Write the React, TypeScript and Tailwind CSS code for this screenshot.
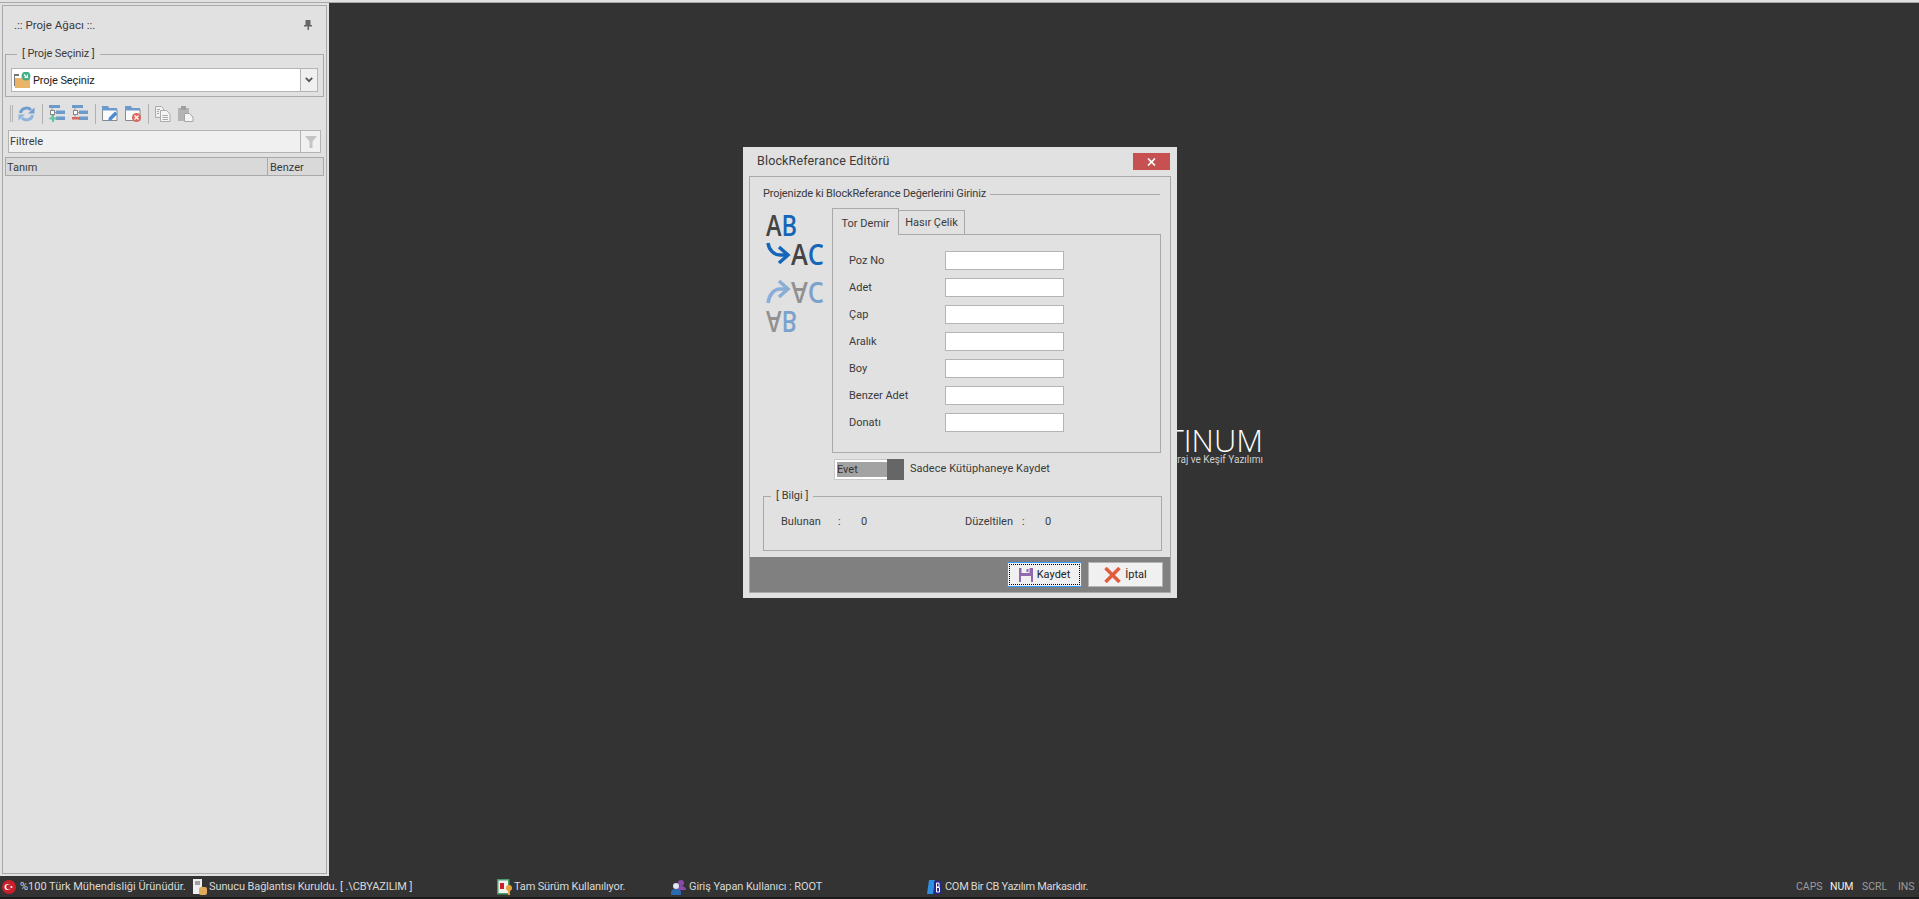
import type { ReactNode } from 'react'

const fieldRows = ['Poz No', 'Adet', 'Çap', 'Aralık', 'Boy', 'Benzer Adet', 'Donatı']

function Refresh() {
    return (
        <svg width="17" height="16" viewBox="0 0 17 16" fill="none">
            <path d="M2.500 7a6 5.500 0 0 1 10.500-3" stroke="#6f9fd0" strokeWidth="3" />
            <path d="M14.500 9a6 5.500 0 0 1-10.500 3" stroke="#8fb5dc" strokeWidth="3" />
            <path d="M16.500 1.500v6h-6.500z" fill="#6f9fd0" />
            <path d="M0.500 14.500v-6h6.500z" fill="#8fb5dc" />
        </svg>
    )
}

function TreeIcon({ mark }: { mark: 'add' | 'remove' }) {
    return (
        <svg width="16" height="17" viewBox="0 0 16 17" fill="none">
            <rect x="0" y="0" width="11" height="3" fill="#6c9bcb" />
            <path d="M3 3v10M3 7.500h5" stroke="#999" />
            <rect x="1.500" y="5.500" width="4" height="4" fill="#fff" stroke="#888" />
            <rect x="7" y="5.500" width="9" height="3.500" fill="#6c9bcb" />
            <rect x="7" y="11.500" width="9" height="3.500" fill="#6c9bcb" />
            {mark === 'add' ? (
                <path d="M4 10v7M0.500 13.500h7" stroke="#62c4a0" strokeWidth="2" />
            ) : (
                <rect x="0" y="12" width="8" height="2.500" fill="#d9685a" />
            )}
        </svg>
    )
}

function FolderIcon({ children }: { children: ReactNode }) {
    return (
        <svg width="16" height="16" viewBox="0 0 16 16" fill="none">
            <path d="M0.500 3.500h14.500v11h-14.500z" fill="#fafafa" stroke="#8a8a8a" />
            <path d="M0 0h6l1 2h8v2.500h-15z" fill="#6c9bcb" />
            {children}
        </svg>
    )
}

function CopyIcon() {
    return (
        <svg width="16" height="16" viewBox="0 0 16 16" fill="none" stroke="#ababab">
            <path d="M0.500 0.500h6l2 2v9h-8z" fill="#efefef" />
            <path d="M5.500 4.500h6l3.500 3.500v7.500h-9.500z" fill="#f4f4f4" />
            <path d="M7.500 9.500h5.500M7.500 11.500h5.500M7.500 13.500h5.500M2 3.500h3M2 5.500h2M2 7.500h2" />
        </svg>
    )
}

function PasteIcon() {
    return (
        <svg width="16" height="16" viewBox="0 0 16 16" fill="none">
            <rect x="0" y="2" width="11" height="13" fill="#b4b4b4" />
            <rect x="3" y="0" width="5" height="4" fill="#9e9e9e" />
            <path d="M6.500 7.500h5l3.500 3.500v4.500h-8.500z" fill="#f4f4f4" stroke="#a5a5a5" />
        </svg>
    )
}

function ToolbarSep() {
    return <div className="w-px h-[20px] bg-[#b0b0b0] ml-[7px] mr-[6px]" />
}

function LeftPanel() {
    return (
        <div className="h-full w-[329px] bg-[#e1e1e1] p-[2px] shrink-0">
            <div className="h-full border border-[#a9a9a9] px-[2px] flex flex-col">
                <div className="h-[41px] flex items-start justify-between pl-[9px] pr-[11px] pt-[12px] shrink-0">
                    <span className="text-[11.500px]">.:: Proje Ağacı ::.</span>
                    <svg width="8" height="10" viewBox="0 0 8 10" className="mr-[1px] mt-[2px]">
                        <path d="M1.500 0h5v5h1.500v1.500h-3v3.500h-1.500v-3.500h-3.500v-1.500h1.500z" fill="#666" />
                    </svg>
                </div>
                <fieldset className="border border-[#a9a9a9] h-[50px] px-[5px] min-w-0 shrink-0">
                    <legend className="ml-[6px] px-[5px] leading-[14px] text-[11px] tracking-[-0.100px]">[ Proje Seçiniz ]</legend>
                    <div className="h-[24px] mt-[7px] flex border border-[#b4b4b4] bg-white">
                        <div className="flex-1 flex items-center pl-[2px] gap-[2px]">
                            <svg width="17" height="16" viewBox="0 0 17 16" fill="none">
                                <path d="M0 2h5v2h-5z" fill="#777" />
                                <path d="M0 2h1v12h-1z" fill="#777" />
                                <path d="M1 6h15v10h-15z" fill="#e9b468" />
                                <circle cx="12" cy="4" r="4.500" fill="#44ae88" />
                                <path d="M10 2.500l2.500 2.500M13.500 2.500v3h-3" stroke="#fff" strokeWidth="1.200" />
                            </svg>
                            <span className="text-[#222] mt-[1px] tracking-[-0.100px]">Proje Seçiniz</span>
                        </div>
                        <div className="w-[17px] bg-[#f0f0f0] border-l border-[#b4b4b4] flex items-center justify-center">
                            <svg width="8" height="6" viewBox="0 0 8 6" fill="none">
                                <path d="M0.800 0.800l3.200 3.400l3.200-3.400" stroke="#555" strokeWidth="1.800" />
                            </svg>
                        </div>
                    </div>
                </fieldset>
                <div className="h-[27px] mt-[3px] flex items-center pl-[5px] shrink-0">
                    <div className="w-[3px] h-[17px] border-x border-[#b5b5b5] mr-[5px]" />
                    <Refresh />
                    <ToolbarSep />
                    <TreeIcon mark="add" />
                    <div className="w-[7px]" />
                    <TreeIcon mark="remove" />
                    <ToolbarSep />
                    <FolderIcon>
                        <path d="M6 15l1-3.500l6-6l2.500 2.500l-6 6z" fill="#4d8ad0" />
                    </FolderIcon>
                    <div className="w-[7px]" />
                    <FolderIcon>
                        <circle cx="11.500" cy="11.500" r="4.500" fill="#d9685a" />
                        <path d="M9.500 9.500l4 4M13.500 9.500l-4 4" stroke="#fff" strokeWidth="1.300" />
                    </FolderIcon>
                    <ToolbarSep />
                    <CopyIcon />
                    <div className="w-[7px]" />
                    <PasteIcon />
                </div>
                <div className="h-[23px] mt-[3px] mx-[3px] flex border border-[#b4b4b4] bg-[#f0f0f0] shrink-0">
                    <span className="flex-1 leading-[21px] pl-[1px]">Filtrele</span>
                    <div className="w-[20px] border-l border-[#b4b4b4] flex items-center justify-center">
                        <svg width="12" height="12" viewBox="0 0 12 12">
                            <path d="M0 0h12l-4.500 5.500v6.500h-3v-6.500z" fill="#c4c4c4" />
                        </svg>
                    </div>
                </div>
                <div className="h-[19px] mt-[4px] flex border border-[#a9a9a9] bg-[#d9d9d9] shrink-0 leading-[19px]">
                    <span className="flex-1 pl-[1px]">Tanım</span>
                    <span className="w-[56px] border-l border-[#a9a9a9] pl-[2px]">Benzer</span>
                </div>
            </div>
        </div>
    )
}

function AbLogo() {
    const font = { fontFamily: '"Open Sans", sans-serif', fontWeight: 600, fontSize: 28 }
    const letters = (
        <>
            <text x="1" y="21" textLength="31" lengthAdjust="spacingAndGlyphs">
                <tspan fill="#444444">A</tspan>
                <tspan fill="#1565b8">B</tspan>
            </text>
            <text x="26" y="50" textLength="33" lengthAdjust="spacingAndGlyphs">
                <tspan fill="#444444">A</tspan>
                <tspan fill="#1565b8">C</tspan>
            </text>
        </>
    )
    return (
        <svg width="60" height="118" viewBox="0 0 60 118" className="shrink-0">
            <g style={font}>{letters}</g>
            <g style={font} transform="translate(0 117) scale(1 -1)" opacity="0.5">
                {letters}
            </g>
            <path d="M3 28c1 7 6 12 12 12h8" fill="none" stroke="#1565b8" strokeWidth="3.500" />
            <path d="M14 32l9 8l-9 8" fill="none" stroke="#1565b8" strokeWidth="3.500" />
            <path d="M3 88c1-8 6-14 12-14h8" fill="none" stroke="#8aaed8" strokeWidth="3.500" />
            <path d="M14 66l9 8l-9 8" fill="none" stroke="#8aaed8" strokeWidth="3.500" />
        </svg>
    )
}

function Dialog() {
    return (
        <div className="absolute left-[743px] top-[147px] w-[434px] h-[451px] bg-[#e1e1e1] flex flex-col text-[#3a3a3a]">
            <div className="h-[29px] flex items-start justify-between pl-[14px] pr-[7px] pt-[6px] shrink-0">
                <span className="text-[12.500px] leading-[16px] tracking-[0.150px]">BlockReferance Editörü</span>
                <div className="w-[37px] h-[17px] bg-[#c75050] flex items-center justify-center">
                    <svg width="9" height="8" viewBox="0 0 9 8" fill="none">
                        <path d="M1 0.500l7 7M8 0.500l-7 7" stroke="#fff" strokeWidth="1.700" />
                    </svg>
                </div>
            </div>
            <div className="flex-1 mx-[6px] mb-[5px] border border-[#a9a9a9] flex flex-col min-h-0">
                <div className="flex items-center gap-[4px] pl-[13px] pr-[10px] mt-[10px] h-[14px] shrink-0">
                    <span className="tracking-[-0.150px]">Projenizde ki BlockReferance Değerlerini Giriniz</span>
                    <div className="flex-1 h-px bg-[#a9a9a9]" />
                </div>
                <div className="flex mt-[7px] shrink-0">
                    <div className="w-[82px] pl-[15px] pt-[7px]">
                        <AbLogo />
                    </div>
                    <div className="w-[329px]">
                        <div className="h-[27px] flex items-start">
                            <div className="relative z-10 h-[27px] w-[67px] pt-[3px] border border-b-0 border-[#a9a9a9] bg-[#e1e1e1] flex items-center justify-center">
                                Tor Demir
                            </div>
                            <div className="h-[25px] mt-[2px] w-[66px] border border-l-0 border-b-0 border-[#a9a9a9] flex items-center justify-center">
                                Hasır Çelik
                            </div>
                        </div>
                        <div className="-mt-px h-[219px] border border-[#a9a9a9] pl-[16px] pt-[16px] flex flex-col gap-[8px]">
                            {fieldRows.map((label) => (
                                <div key={label} className="flex items-center h-[19px]">
                                    <span className="w-[96px]">{label}</span>
                                    <div className="w-[119px] h-[19px] bg-white border border-[#b4b4b4]" />
                                </div>
                            ))}
                        </div>
                    </div>
                </div>
                <div className="flex items-center ml-[84px] mt-[5px] h-[22px] shrink-0">
                    <div className="w-[70px] h-[21px] flex border border-[#c8c8c8] bg-white p-[2px] pr-0 border-r-0">
                        <div className="w-[50px] bg-[#a3a3a3] leading-[15px] text-[#333]">Evet</div>
                        <div className="flex-1 bg-[#666666] -my-[3px]" />
                    </div>
                    <span className="ml-[6px] tracking-[0.050px]">Sadece Kütüphaneye Kaydet</span>
                </div>
                <fieldset className="mx-[13px] mt-[9px] h-[62px] w-[399px] border border-[#a9a9a9] min-w-0 shrink-0">
                    <legend className="ml-[7px] px-[5px] leading-[14px]">[ Bilgi ]</legend>
                    <div className="flex mt-[12px] pl-[17px]">
                        <span className="w-[57px]">Bulunan</span>
                        <span className="w-[23px]">:</span>
                        <span className="w-[104px]">0</span>
                        <span className="w-[57px]">Düzeltilen</span>
                        <span className="w-[23px] ml-[-11px] pl-[11px] box-content">:</span>
                        <span>0</span>
                    </div>
                </fieldset>
                <div className="mt-auto h-[35px] bg-[#808080] flex items-center justify-end pr-[7px] gap-[6px] shrink-0">
                    <div className="w-[75px] h-[25px] bg-[#f0f0f0] border border-[#3399ff] p-px">
                        <div className="h-full border border-dotted border-black flex items-center justify-center gap-[4px]">
                            <svg width="14" height="14" viewBox="0 0 14 14">
                                <path d="M0 0h14v14h-14z" fill="#9069b0" />
                                <rect x="2.500" y="0" width="8" height="5" fill="#f0f0f0" />
                                <rect x="7.500" y="1" width="2" height="3" fill="#9069b0" />
                                <rect x="2" y="8" width="10" height="6" fill="#f0f0f0" />
                            </svg>
                            <span className="text-[#222]">Kaydet</span>
                        </div>
                    </div>
                    <div className="w-[75px] h-[25px] bg-[#f0f0f0] border border-[#b4b4b4] flex items-center justify-center gap-[4px]">
                        <svg width="17" height="16" viewBox="0 0 17 16" fill="none">
                            <path d="M1.500 1l14 14M15.500 1l-14 14" stroke="#e25b3c" strokeWidth="3.500" />
                        </svg>
                        <span className="text-[#222]">İptal</span>
                    </div>
                </div>
            </div>
        </div>
    )
}

function StatusBar() {
    return (
        <div className="h-[23px] shrink-0 flex items-center pt-[1px] text-[11px] text-[#d9d9d9] whitespace-nowrap border-b-2 border-[#1c1c1c]">
            <div className="w-[193px] flex items-center pl-[2px] gap-[4px] shrink-0">
                <svg width="14" height="14" viewBox="0 0 14 14">
                    <circle cx="7" cy="7" r="7" fill="#c9202c" />
                    <circle cx="5.500" cy="7" r="3" fill="#fff" />
                    <circle cx="6.500" cy="7" r="2.400" fill="#c9202c" />
                    <circle cx="9.500" cy="7" r="1" fill="#fff" />
                </svg>
                <span>%100 Türk Mühendisliği Ürünüdür.</span>
            </div>
            <div className="w-[304px] flex items-center gap-[1px] shrink-0">
                <svg width="15" height="16" viewBox="0 0 15 16">
                    <rect x="0" y="0" width="9" height="15" fill="#eeeeee" />
                    <path d="M2 3h5M2 5h5" stroke="#555" />
                    <rect x="6" y="8" width="8" height="8" rx="2" fill="#e0a95c" />
                </svg>
                <span className="tracking-[-0.100px]">Sunucu Bağlantısı Kuruldu. [ .\CBYAZILIM ]</span>
            </div>
            <div className="w-[174px] flex items-center gap-[1px] shrink-0">
                <svg width="16" height="16" viewBox="0 0 16 16">
                    <rect x="0.750" y="0.750" width="11" height="14" fill="#f2f2f2" stroke="#4a9e6a" strokeWidth="1.500" />
                    <rect x="3" y="4" width="4" height="6" fill="#c9202c" />
                    <circle cx="12" cy="9" r="3" fill="#e8a33c" />
                    <rect x="11" y="10" width="2" height="6" fill="#e8a33c" />
                </svg>
                <span className="tracking-[-0.150px]">Tam Sürüm Kullanılıyor.</span>
            </div>
            <div className="w-[256px] flex items-center gap-[3px] shrink-0">
                <svg width="15" height="16" viewBox="0 0 15 16">
                    <circle cx="10" cy="4" r="3" fill="#8a4aa8" />
                    <path d="M6 11c0-3 2-4 4-4s5 1 5 4z" fill="#8a4aa8" />
                    <circle cx="5" cy="7" r="3" fill="#dfe7ef" />
                    <path d="M0 16v-3c0-2 2-3 5-3s5 1 5 3v3z" fill="#2b69b0" />
                </svg>
                <span className="tracking-[-0.100px]">Giriş Yapan Kullanıcı : ROOT</span>
            </div>
            <div className="flex items-center gap-[3px]">
                <svg width="15" height="16" viewBox="0 0 15 16">
                    <path d="M2 1h6l-2 14h-6z" fill="#2f8fe0" />
                    <rect x="7" y="2" width="8" height="13" fill="#26268f" />
                    <path d="M9.500 4v9M9.500 4h2.500v4h-2.500M9.500 8.500h3v4.500h-3" fill="none" stroke="#fff" />
                </svg>
                <span className="tracking-[-0.300px]">COM Bir CB Yazılım Markasıdır.</span>
            </div>
            <div className="ml-auto flex pr-[5px] text-[10.500px] text-[#9c9c9c]">
                <span className="w-[34px]">CAPS</span>
                <span className="w-[32px] text-[#f2f2f2]">NUM</span>
                <span className="w-[36px]">SCRL</span>
                <span className="w-[16px]">INS</span>
            </div>
        </div>
    )
}

export default function App() {
    return (
        <div className="relative h-[899px] w-full overflow-hidden bg-[#333333] text-[11px] leading-[14px] text-[#3a3a3a] flex flex-col font-['Roboto','Noto_Sans',sans-serif]">
            <div className="h-[3px] shrink-0 bg-[#e1e1e1] border-b border-[#a9a9a9]" />
            <div className="flex-1 min-h-0 flex">
                <LeftPanel />
                <div className="flex-1 relative">
                    <div className="absolute right-[656px] top-[419px] text-right text-white">
                        <div className="font-['Open_Sans',sans-serif] font-light text-[31px] leading-[36px] whitespace-nowrap">PLATINUM</div>
                        <div className="text-[10px] leading-[10px] -mt-[3px] text-[#cfcfcf] whitespace-nowrap">Metraj ve Keşif Yazılımı</div>
                    </div>
                </div>
            </div>
            <StatusBar />
            <Dialog />
        </div>
    )
}
